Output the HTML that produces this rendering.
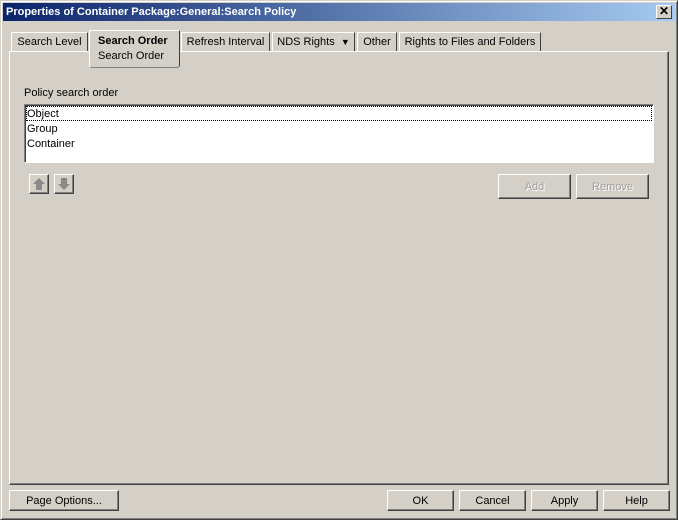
<!DOCTYPE html>
<html><head><style>
*{box-sizing:border-box;margin:0;padding:0}
body{width:678px;height:520px;background:#d4d0c8;font-family:"Liberation Sans",sans-serif;font-size:11px;position:relative;overflow:hidden;color:#000}
.win{position:absolute;left:0;top:0;width:678px;height:520px;border:1px solid;border-color:#d4d0c8 #404040 #404040 #d4d0c8;box-shadow:inset 1px 1px #fff,inset -1px -1px #808080}
.title{position:absolute;left:3px;top:3px;width:672px;height:18px;background:linear-gradient(90deg,#0a246a,#a6caf0);color:#fff;font-weight:bold;font-size:11px;line-height:19px;padding-left:3px}
.x{position:absolute;left:656px;top:5px;width:16px;height:14px;background:#d4d0c8;border:1px solid;border-color:#fff #404040 #404040 #fff;font-size:12px;line-height:11px;text-align:center;color:#000;font-weight:bold}
.a{position:absolute}
.tab{position:absolute;top:32px;height:19px;border:1px solid;border-color:#fff #404040 transparent #fff;border-bottom:none;line-height:19px;text-align:center;background:#d4d0c8}
.panel{position:absolute;left:9px;top:51px;width:660px;height:434px;border:1px solid;border-color:#fff #404040 #404040 #fff;box-shadow:inset -1px -1px #808080}
.btn{position:absolute;height:21px;border:1px solid;border-color:#fff #404040 #404040 #fff;box-shadow:inset -1px -1px #808080;text-align:center;line-height:21px;background:#d4d0c8}
.dis{color:#a0a0a0;text-shadow:1px 1px #fff}
</style></head><body>
<div class="win"></div>
<div class="title">Properties of Container Package:General:Search Policy</div>
<div class="x">✕</div>
<div class="panel"></div>
<div class="tab" style="left:11px;width:77px">Search Level</div>
<div class="tab" style="left:181px;width:89px">Refresh Interval</div>
<div class="tab" style="left:272px;width:83px">NDS Rights&nbsp; <span style="font-size:9px">▼</span></div>
<div class="tab" style="left:357px;width:40px">Other</div>
<div class="tab" style="left:399px;width:142px">Rights to Files and Folders</div>
<div class="a" style="left:89px;top:30px;width:91px;height:38px;background:#d4d0c8;border:1px solid;border-color:#fff #404040 #808080 #fff;border-radius:0 0 3px 3px"></div>
<div class="a" style="left:98px;top:35px;font-weight:bold">Search Order</div>
<div class="a" style="left:98px;top:50px">Search Order</div>
<div class="a" style="left:24px;top:87px">Policy search order</div>
<div class="a" style="left:24px;top:104px;width:630px;height:59px;background:#fff;border:1px solid;border-color:#808080 #fff #fff #808080;box-shadow:inset 1px 1px #404040"></div>
<div class="a" style="left:26px;top:106px;width:626px;height:15px;border:1px dotted #000"></div>
<div class="a" style="left:27px;top:108px">Object</div>
<div class="a" style="left:27px;top:123px">Group</div>
<div class="a" style="left:27px;top:138px">Container</div>
<div class="btn" style="left:29px;top:174px;width:20px;height:20px"><svg width="14" height="14" viewBox="0 0 14 14" style="margin-top:2px"><path d="M7 1L1 7h3v6h6V7h3z" fill="#8a8a8a"/></svg></div>
<div class="btn" style="left:54px;top:174px;width:20px;height:20px"><svg width="14" height="14" viewBox="0 0 14 14" style="margin-top:2px"><path d="M7 13L1 7h3V1h6v6h3z" fill="#8a8a8a"/></svg></div>
<div class="btn dis" style="left:498px;top:174px;width:73px;height:25px;line-height:24px">Add</div>
<div class="btn dis" style="left:576px;top:174px;width:73px;height:25px;line-height:24px">Remove</div>
<div class="btn" style="left:9px;top:490px;width:110px">Page Options...</div>
<div class="btn" style="left:387px;top:490px;width:67px">OK</div>
<div class="btn" style="left:459px;top:490px;width:67px">Cancel</div>
<div class="btn" style="left:531px;top:490px;width:67px">Apply</div>
<div class="btn" style="left:603px;top:490px;width:67px">Help</div>
</body></html>
